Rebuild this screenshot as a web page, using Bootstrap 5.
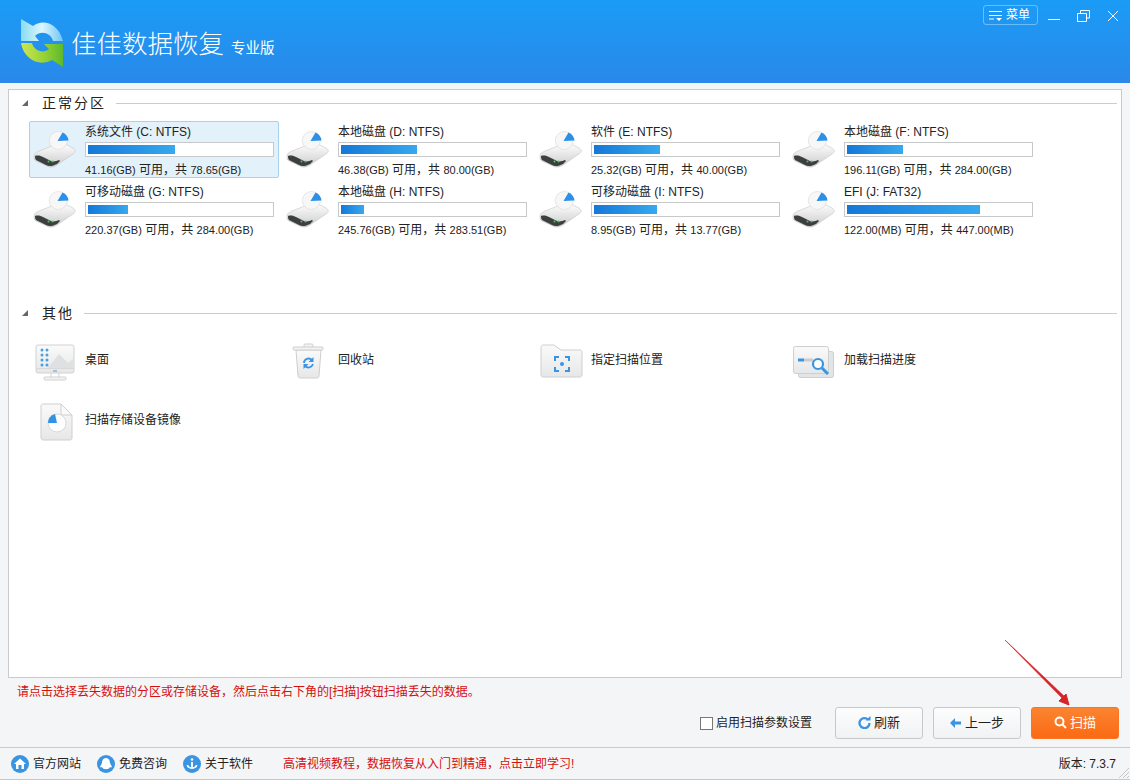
<!DOCTYPE html>
<html lang="zh-CN">
<head>
    <meta charset="UTF-8">
    <title>佳佳数据恢复</title>
    <link href="https://cdn.jsdelivr.net/npm/bootstrap@5.3.0/dist/css/bootstrap.min.css" rel="stylesheet">
    <style>
        html, body { height: 100%; overflow: hidden; }
        body {
            background: #f4f5f7;
            color: #222;
            font: 12px/16px "Liberation Sans", "Noto Sans CJK SC", sans-serif;
        }
        .app-win { position: relative; width: 1130px; height: 780px; border-bottom: 1px solid #c6c8cb; }
        .app-head {
            height: 83px;
            padding: 0 11px 0 20px;
            background: linear-gradient(#1a9cf6, #2a88e9);
            color: #fff;
        }
        .app-title { font: 300 25.500px/34px "Noto Sans CJK SC", sans-serif; margin: 7px 0 0 5px; }
        .app-edition { font: 400 14.500px/20px "Noto Sans CJK SC", sans-serif; margin: 19px 0 0 7px; }
        .menu-btn {
            width: 55px; height: 20px; padding: 0 0 0 4px;
            margin-top: 5px;
            border: 1px solid rgba(255,255,255,.35);
            border-radius: 3px;
            color: #fff;
            font-size: 12px;
            line-height: 18px;
        }
        .menu-btn svg { margin-right: 3px; }
        .win-btns { gap: 17px; margin: 10px 0 0 10px; }
        .main-panel {
            height: 589px;
            margin: 6px 8px 0;
            padding-top: 5px;
            background: #fff;
            border: 1px solid #c8cacc;
        }
        .sec-head { height: 16px; padding: 0 4px 0 13px; font-size: 14px; letter-spacing: 2px; color: #222; }
        .sec-head::after { content: ""; flex: 1; height: 1px; background: #ccc; margin-left: 10px; }
        .sec-tri { width: 0; height: 0; margin-right: 14px; border-left: 6px solid transparent; border-bottom: 6px solid #666; }
        .drive-grid { display: grid; grid-template-columns: repeat(4, 253px); grid-auto-rows: 60px; padding-left: 20px; margin-top: 10px; }
        .drive-item { width: 250px; height: 57px; padding: 2px 0 0 3px; border: 1px solid transparent; border-radius: 2px; }
        .drive-item.on { background: #e3f1fb; border-color: #a8d1ee; }
        .drive-item svg { width: 46px; height: 44px; margin: 4px 6px 0 0; flex: none; }
        .use-bar { width: 189px; height: 15px; margin: 2px 0 5px; padding: 2px; background: #fff; border: 1px solid #c6c8ca; }
        .use-fill { height: 100%; background: linear-gradient(90deg, #1578d8, #36a9ee); }
        .stat-num { font-size: 11px; }
        .other-sec { margin-top: 64px; }
        .other-grid { display: grid; grid-template-columns: repeat(4, 253px); grid-auto-rows: 60px; padding-left: 20px; margin-top: 8px; }
        .other-item { font-size: 12px; padding: 2px 0 0 5px; }
        .other-item svg { width: 46px; height: 44px; margin-right: 5px; flex: none; }
        .bottom-area { height: 69px; padding: 6px 11px 0 17px; }
        .tip-red { color: #d40f0f; }
        .act-row { height: 32px; margin-top: 7px; }
        .act-check { width: 13px; height: 13px; margin-right: 3px; background: #fff; border: 1px solid #777; }
        .act-label { margin-right: 13px; }
        .act-btn {
            width: 88px; height: 32px; padding: 0;
            margin-left: 10px;
            background: linear-gradient(#fdfdfd, #f1f2f4);
            border: 1px solid #c6c8ca;
            border-radius: 3px;
            color: #222;
            font-size: 13px;
            line-height: 30px;
        }
        .act-btn.go { background: linear-gradient(#fb8431, #fb6a14); border-color: #fb7420; color: #fff; }
        .act-btn svg { margin-right: 3px; vertical-align: -2px; }
        .status-row { height: 32px; padding: 0 14px 0 11px; border-top: 1px solid #c8cacc; }
        .status-link { width: 86px; }
        .status-link svg { margin-right: 4px; }
        .status-red { margin-left: 14px; }
        .arrow-over { position: absolute; left: 1000px; top: 636px; pointer-events: none; }
        .grip-over { position: absolute; right: 1px; bottom: 1px; }
    </style>
</head>
<body>
    <!-- shared icons -->
    <svg width="0" height="0" class="position-absolute">
        <defs>
            <linearGradient id="gDisk" x1="0" y1="0" x2="0" y2="1"><stop offset="0" stop-color="#ffffff"/><stop offset="1" stop-color="#c9cbc9"/></linearGradient>
            <linearGradient id="gPale" x1="0" y1="0" x2="0" y2="1"><stop offset="0" stop-color="#fafafa"/><stop offset="1" stop-color="#e6e7e8"/></linearGradient>
            <linearGradient id="gLogoB" x1="0" y1="0" x2="1" y2="0"><stop offset="0" stop-color="#86dcf2"/><stop offset=".5" stop-color="#def6fc"/><stop offset="1" stop-color="#6cc6f6"/></linearGradient>
            <linearGradient id="gLogoG" x1="0" y1="0" x2="1" y2="0"><stop offset="0" stop-color="#cfe652"/><stop offset=".6" stop-color="#8fd034"/><stop offset="1" stop-color="#5db92a"/></linearGradient>
            <symbol id="icDrive" viewBox="0 0 46 44">
                <path d="M1 28C1 25 4 24 6 23L24 16C27 15 30 15 32 16L40 20C43 22 43 24 40 26L24 37C21 39 17 40 14 38L3 33C1 32 1 30 1 28Z" fill="url(#gDisk)" stroke="#c4c6c4" stroke-width=".6"/>
                <path d="M2 28C5 27 8 28 10 29L18 33C20 34 24 33 26 32L27 33L24 36C20 38 16 39 13 37L3 32C2 31 2 29 2 28Z" fill="#3c3f40"/>
                <circle cx="15.500" cy="33.500" r="1" fill="#4cc35a"/><circle cx="19.500" cy="33.500" r="1" fill="#4cc35a"/>
                <circle cx="25.300" cy="12.500" r="9" fill="#f7f7f7" stroke="#dcdcdc" stroke-width=".7"/>
                <path d="M24.500 13L29.500 4.500A10 10 0 0 1 35.500 12.500Z" fill="#2c8fe8"/>
            </symbol>
            <symbol id="icPie" viewBox="0 0 20 20">
                <circle cx="10" cy="10" r="9" fill="#fff" stroke="#d8d8d8"/>
                <path d="M10 10H1A9 9 0 0 1 8 1Z" fill="#2f93ea"/>
            </symbol>
        </defs>
    </svg>

    <div class="app-win d-flex flex-column">
        <header class="app-head d-flex flex-shrink-0">
            <div class="d-flex align-items-start flex-grow-1" style="padding-top:18px">
                <svg width="46" height="50" viewBox="0 0 46 50">
                    <path d="M1 1L13 8C22 1 38 4 43 23H33C31 15 21 12 15 18L19 23H1Z" fill="url(#gLogoB)"/>
                    <path d="M1 25H12C14 33 24 36 29 31L24 26H43V49L32 42C20 49 4 42 1 25Z" fill="url(#gLogoG)"/>
                </svg>
                <div class="app-title">佳佳数据恢复</div>
                <div class="app-edition">专业版</div>
            </div>
            <button class="btn menu-btn d-flex align-items-center" type="button">
                <svg width="15" height="14" viewBox="0 0 15 14" fill="none" stroke="#fff"><path d="M1 3.500H14M1 7.500H14M1 11H6"/><path d="M8 10H14L11 13Z" fill="#fff" stroke="none"/></svg>菜单
            </button>
            <div class="win-btns d-flex">
                <svg width="12" height="12" viewBox="0 0 12 12" stroke="#fff" fill="none"><path d="M0 9.500H12"/></svg>
                <svg width="13" height="12" viewBox="0 0 13 12" stroke="#fff" fill="none"><path d="M.5 3.500H9.500V11.500H.5ZM3.500 3V.5H12.500V8H10"/></svg>
                <svg width="12" height="12" viewBox="0 0 12 12" stroke="#fff" fill="none"><path d="M1 1L11 11M11 1L1 11"/></svg>
            </div>
        </header>

        <main class="main-panel flex-shrink-0">
            <div class="sec-head d-flex align-items-center"><span class="sec-tri"></span>正常分区</div>
            <div class="drive-grid" id="driveGrid"></div>
            <div class="sec-head other-sec d-flex align-items-center"><span class="sec-tri"></span>其他</div>
            <div class="other-grid">
                <div class="other-item d-flex align-items-center">
                    <svg viewBox="0 0 46 44"><rect x="2" y="7" width="38" height="28" rx="2" fill="url(#gPale)" stroke="#d2d2d2"/><path d="M2 30.500H40" stroke="#d8d8d8"/><path d="M14 30L25 16L34 25L39 21V30Z" fill="#dfe0e1"/><g fill="#4a9fe0"><circle cx="8" cy="12" r="1.500"/><circle cx="13" cy="12" r="1.500"/><circle cx="8" cy="17" r="1.500"/><circle cx="13" cy="17" r="1.500"/><circle cx="8" cy="22" r="1.500"/><circle cx="13" cy="22" r="1.500"/><circle cx="8" cy="27" r="1.500"/><circle cx="13" cy="27" r="1.500"/></g><path d="M19 33H23" stroke="#4a9fe0"/><path d="M17 35V39M25 35V39" stroke="#d2d2d2"/><rect x="10" y="39" width="22" height="3" rx="1" fill="#f2f2f2" stroke="#d2d2d2"/></svg>
                    桌面
                </div>
                <div class="other-item d-flex align-items-center">
                    <svg viewBox="0 0 46 44"><path d="M9 12H34L32 38C32 39 31 40 30 40H13C12 40 11 39 11 38Z" fill="url(#gPale)" stroke="#cfcfcf"/><path d="M17 9V7C17 6 18 6 19 6H24C25 6 26 6 26 7V9" fill="#f3f3f3" stroke="#cfcfcf"/><rect x="6" y="9" width="30" height="3" rx="1" fill="#f3f3f3" stroke="#cfcfcf"/><path d="M17 25C17 21 22 19 25 22M26 26C25 29 21 31 18 28" fill="none" stroke="#3a94e2" stroke-width="1.800"/><path d="M26.500 19V24H21.500ZM16.500 31V26H21.500Z" fill="#3a94e2"/></svg>
                    回收站
                </div>
                <div class="other-item d-flex align-items-center">
                    <svg viewBox="0 0 46 44"><path d="M1 10C1 8 2 7 3 7H14L21 12H40C41 12 42 13 42 14V37C42 38 41 39 40 39H3C2 39 1 38 1 37Z" fill="url(#gPale)" stroke="#cfcfcf"/><path d="M15 23V19H19M25 19H29V23M29 29V33H25M19 33H15V29" fill="none" stroke="#3a94e2" stroke-width="2"/><circle cx="22" cy="26" r="2" fill="#3a94e2"/></svg>
                    指定扫描位置
                </div>
                <div class="other-item d-flex align-items-center">
                    <svg viewBox="0 0 46 44"><rect x="5.500" y="13.500" width="35" height="26" rx="2" fill="#e3e4e5" stroke="#cfcfcf"/><rect x=".5" y="8.500" width="35" height="27" rx="2" fill="url(#gPale)" stroke="#cfcfcf"/><path d="M5 22H11" stroke="#3a94e2" stroke-width="3"/><path d="M11 22H20" stroke="#ccc" stroke-width="3"/><circle cx="25" cy="26" r="5" fill="#fff" stroke="#3a94e2" stroke-width="2.200"/><path d="M29 30L35 36" stroke="#3a94e2" stroke-width="3"/></svg>
                    加载扫描进度
                </div>
                <div class="other-item d-flex align-items-center">
                    <svg viewBox="0 0 46 44"><path d="M7 8C7 7 8 6 9 6H27L38 17V40C38 41 37 42 36 42H9C8 42 7 41 7 40Z" fill="url(#gPale)" stroke="#cfcfcf"/><path d="M27 6V17H38Z" fill="#fafafa" stroke="#cfcfcf"/><use href="#icPie" x="13" y="15" width="20" height="20"/></svg>
                    扫描存储设备镜像
                </div>
            </div>
        </main>

        <section class="bottom-area flex-shrink-0">
            <div class="tip-red">请点击选择丢失数据的分区或存储设备&#xFF0C;然后点击右下角的[扫描]按钮扫描丢失的数据。</div>
            <div class="act-row d-flex align-items-center justify-content-end">
                <span class="act-check"></span>
                <span class="act-label">启用扫描参数设置</span>
                <button class="btn act-btn" type="button"><svg width="13" height="13" viewBox="0 0 13 13" fill="none" stroke="#3a94e2" stroke-width="2.300"><path d="M10 3.500A5 5 0 1 0 11.500 7"/><path d="M7.500 4.500H12.500V0Z" fill="#3a94e2" stroke="none"/></svg>刷新</button>
                <button class="btn act-btn" type="button"><svg width="12" height="12" viewBox="0 0 12 12" fill="#3a94e2"><path d="M0 6L5 1V4.500H11V7.500H5V11Z"/></svg>上一步</button>
                <button class="btn act-btn go" type="button"><svg width="13" height="13" viewBox="0 0 13 13" fill="none" stroke="#fff" stroke-width="2"><circle cx="5.500" cy="5.500" r="4"/><path d="M8.500 8.500L12 12"/></svg>扫描</button>
            </div>
        </section>

        <footer class="status-row d-flex align-items-center flex-shrink-0">
            <span class="status-link d-flex align-items-center"><svg width="18" height="18" viewBox="0 0 18 18"><circle cx="9" cy="9" r="9" fill="#3a94e2"/><path d="M9 3.500L15 9H13V14H5V9H3Z" fill="#fff"/><rect x="7.500" y="10" width="3" height="4" fill="#3a94e2"/></svg>官方网站</span>
            <span class="status-link d-flex align-items-center"><svg width="18" height="18" viewBox="0 0 18 18"><circle cx="9" cy="9" r="9" fill="#3a94e2"/><path d="M9 3C12 3 13 6 13 8L15 12C14 13 13 12 13 12C12 15 6 15 5 12C5 12 4 13 3 12L5 8C5 6 6 3 9 3Z" fill="#fff"/></svg>免费咨询</span>
            <span class="status-link d-flex align-items-center"><svg width="18" height="18" viewBox="0 0 18 18"><circle cx="9" cy="9" r="9" fill="#3a94e2"/><circle cx="9" cy="4.500" r="1.300" fill="#fff"/><path d="M9 7V13M4.500 10C5 14 13 14 13.500 10" fill="none" stroke="#fff" stroke-width="1.800"/></svg>关于软件</span>
            <span class="tip-red status-red">高清视频教程&#xFF0C;数据恢复从入门到精通&#xFF0C;点击立即学习!</span>
            <span class="ms-auto">版本: 7.3.7</span>
        </footer>

        <svg class="arrow-over" width="80" height="76" viewBox="0 0 80 76"><path d="M5 4L64.500 60.500L62.500 62.500Z" fill="#d8232a" stroke="#d8232a" stroke-width=".6"/><path d="M69 69L59 65L66 58Z" fill="#d8232a" stroke="#d8232a"/></svg>
        <svg class="grip-over" width="11" height="11" viewBox="0 0 11 11" stroke="#c4c6c8"><path d="M1 11L11 1M5 11L11 5M9 11L11 9"/></svg>
    </div>

    <script src="https://cdn.jsdelivr.net/npm/bootstrap@5.3.0/dist/js/bootstrap.bundle.min.js"></script>
    <script>
        const drives = [
            ['系统文件 (C: NTFS)', '41.16(GB) 可用\uFF0C共 78.65(GB)', 87],
            ['本地磁盘 (D: NTFS)', '46.38(GB) 可用\uFF0C共 80.00(GB)', 76],
            ['软件 (E: NTFS)', '25.32(GB) 可用\uFF0C共 40.00(GB)', 66],
            ['本地磁盘 (F: NTFS)', '196.11(GB) 可用\uFF0C共 284.00(GB)', 56],
            ['可移动磁盘 (G: NTFS)', '220.37(GB) 可用\uFF0C共 284.00(GB)', 40],
            ['本地磁盘 (H: NTFS)', '245.76(GB) 可用\uFF0C共 283.51(GB)', 23],
            ['可移动磁盘 (I: NTFS)', '8.95(GB) 可用\uFF0C共 13.77(GB)', 63],
            ['EFI (J: FAT32)', '122.00(MB) 可用\uFF0C共 447.00(MB)', 133]
        ];
        // numbers in the stats line are a size smaller than the CJK around them
        const statHtml = s => s.replace(/[\d.]+\([A-Z]+\)/g, m => `<span class="stat-num">${m}</span>`);
        document.getElementById('driveGrid').innerHTML = drives.map((d, i) => `
            <div class="drive-item d-flex ${i === 0 ? 'on' : ''}">
                <svg><use href="#icDrive"/></svg>
                <div>
                    <div>${d[0]}</div>
                    <div class="use-bar"><div class="use-fill" style="width:${d[2]}px"></div></div>
                    <div>${statHtml(d[1])}</div>
                </div>
            </div>`).join('');
    </script>
</body>
</html>
